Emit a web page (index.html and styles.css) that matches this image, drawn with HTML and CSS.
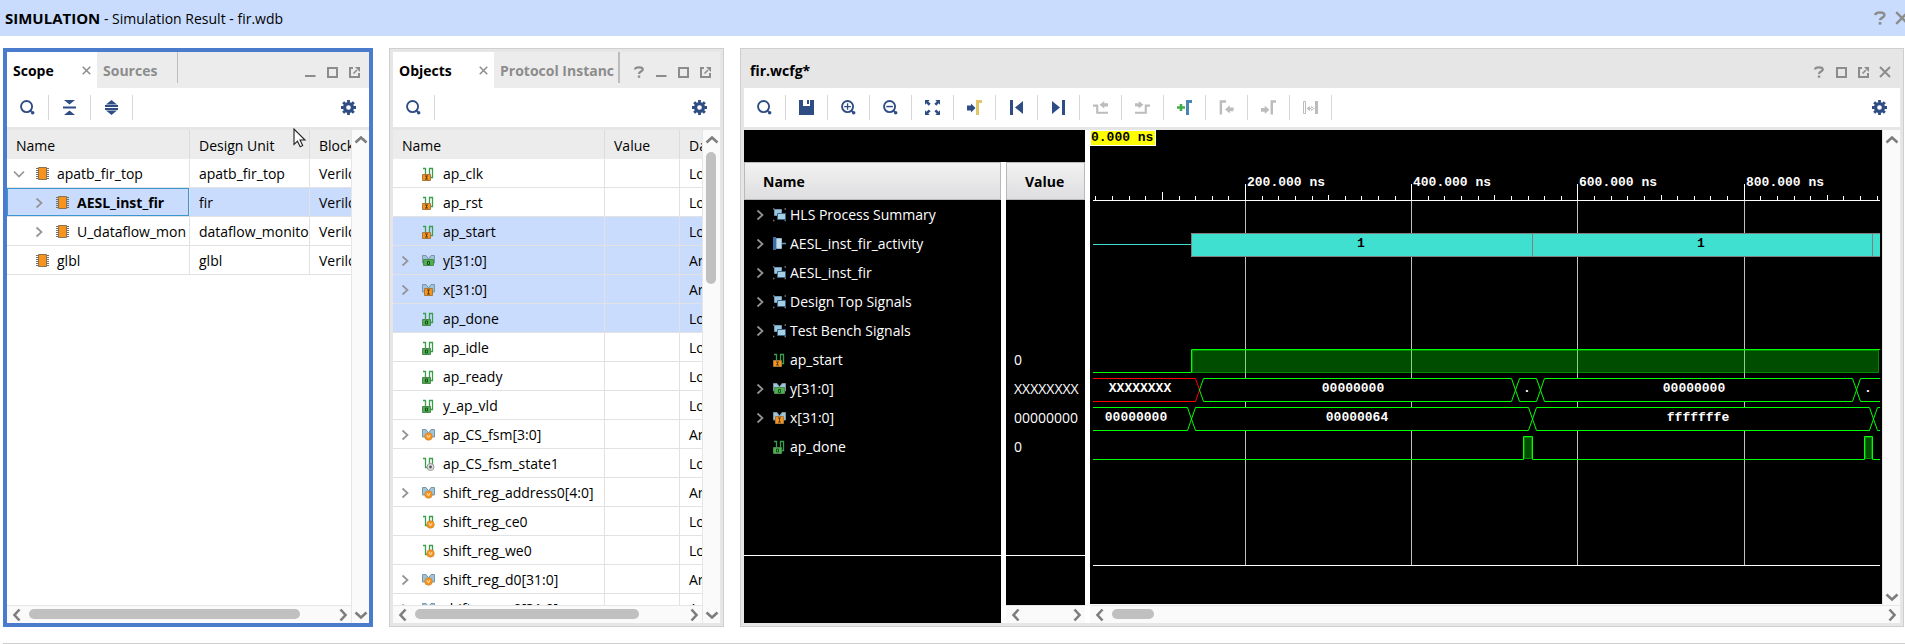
FILE: index.html
```
<!DOCTYPE html>
<html lang="en">
<head>
<meta charset="utf-8">
<title>Simulation Result - fir.wdb</title>
<link rel="stylesheet" href="styles.css">
</head>
<body>
<svg class="defs" aria-hidden="true">
  <symbol id="search" viewBox="0 0 16 16"><circle cx="7" cy="7" r="5.9" fill="none" stroke="currentColor" stroke-width="2"/><path d="M11 11l1.500 1.500" stroke="currentColor" stroke-width="2"/><circle cx="13.500" cy="13.500" r="1.900" fill="currentColor"/></symbol>
  <symbol id="zoomin" viewBox="0 0 16 16"><use href="#search"/><path d="M7 3.500v7M3.500 7h7" stroke="currentColor" stroke-width="1.400"/></symbol>
  <symbol id="zoomout" viewBox="0 0 16 16"><use href="#search"/><path d="M3.500 7h7" stroke="currentColor" stroke-width="1.600"/></symbol>
  <symbol id="collapse" viewBox="0 0 15 15"><path d="M2 0h11L7.500 4.500zM1 6.500h13v2H1zM2 15h11L7.500 10.500z" fill="currentColor"/></symbol>
  <symbol id="expand" viewBox="0 0 15 15"><path d="M2 4.500h11L7.500 0zM1 5h13v2H1zM1 8h13v2H1zM2 10.500h11L7.500 15z" fill="currentColor"/></symbol>
  <symbol id="gear" viewBox="0 0 16 16"><circle cx="8" cy="8" r="4.200" fill="none" stroke="currentColor" stroke-width="3.400"/><path d="M8 0v3M8 13v3M0 8h3M13 8h3M2.300 2.300l2 2M11.700 11.700l2 2M2.300 13.700l2-2M11.700 4.300l2-2" stroke="currentColor" stroke-width="3"/></symbol>
  <symbol id="save" viewBox="0 0 15 15"><path d="M0 0h4v6h7V0h4v15H0zM8 0h2v4H8z" fill="currentColor"/></symbol>
  <symbol id="fit" viewBox="0 0 16 16"><path d="M0 0h5L3.500 1.500 6 4 4 6 1.500 3.500 0 5zM16 0v5l-1.500-1.500L12 6l-2-2 2.500-2.500L11 0zM0 16v-5l1.500 1.500L4 10l2 2-2.500 2.500L5 16zM16 16h-5l1.500-1.500L10 12l2-2 2.500 2.500L16 11z" fill="currentColor"/></symbol>
  <symbol id="gocursor" viewBox="0 0 15 15"><path d="M0 5.500h4V3.500L8.500 8 4 12.500V10.500H0z" fill="currentColor"/><path d="M10.500 15V1.500H15" fill="none" stroke="#e2c566" stroke-width="3"/></symbol>
  <symbol id="first" viewBox="0 0 15 15"><path d="M1 0h3v15H1zM14 1v13L6 7.500z" fill="currentColor"/></symbol>
  <symbol id="last" viewBox="0 0 15 15"><path d="M11 0h3v15h-3zM1 1v13L9 7.500z" fill="currentColor"/></symbol>
  <symbol id="prevedge" viewBox="0 0 16 16"><path d="M0 6h4.500v7.500H16" fill="none" stroke="currentColor" stroke-width="2.200"/><path d="M16 3.500h-4V1L7 5l5 4V7h4z" fill="currentColor"/></symbol>
  <symbol id="nextedge" viewBox="0 0 16 16"><path d="M16 6h-4.500v7.500H0" fill="none" stroke="currentColor" stroke-width="2.200"/><path d="M0 3.500h4V1l5 4-5 4V7H0z" fill="currentColor"/></symbol>
  <symbol id="addmark" viewBox="0 0 15 15"><path d="M4 4v7M0 7.500h8" stroke="#3fae49" stroke-width="2.600"/><path d="M10.500 15V1.500H15" fill="none" stroke="#4a86b4" stroke-width="3"/></symbol>
  <symbol id="prevmark" viewBox="0 0 16 16"><path d="M2 15.500V1.500h5.500" fill="none" stroke="currentColor" stroke-width="2.600"/><path d="M15.500 8h-4V5.500L6.500 10l5 4.500V12h4z" fill="currentColor"/></symbol>
  <symbol id="nextmark" viewBox="0 0 16 16"><path d="M11.500 15.500V1.500H16" fill="none" stroke="currentColor" stroke-width="2.600"/><path d="M0 8.500h4V6l5 4.500-5 4.500v-2.500H0z" fill="currentColor"/></symbol>
  <symbol id="swap" viewBox="0 0 15 15"><path d="M.5 1.500h2v12h-2z" fill="none" stroke="currentColor"/><path d="M12 1h3v13h-3zM7 6v5L3.500 8.500zM8 6v5l3.500-2.500zM6 8h4v1H6z" fill="currentColor"/></symbol>
  <symbol id="min" viewBox="0 0 12 12"><path d="M1 10h10.500" stroke="currentColor" stroke-width="2"/></symbol>
  <symbol id="max" viewBox="0 0 12 12"><path d="M2 2h9v9H2z" fill="none" stroke="currentColor" stroke-width="2"/></symbol>
  <symbol id="float" viewBox="0 0 12 12"><path d="M5 2H2v9h9V7" fill="none" stroke="currentColor" stroke-width="2"/><path d="M5.500 7.500L9 4" stroke="currentColor" stroke-width="1.600"/><path d="M7 1h5v5z" fill="currentColor"/></symbol>
  <symbol id="cross" viewBox="0 0 12 12"><path d="M1 1l10 10M11 1L1 11" stroke="currentColor" stroke-width="2"/></symbol>
  <symbol id="help" viewBox="0 0 12 12"><path d="M2 3.500C2.300.6 9.800.6 9.800 3.600 9.800 5.700 6 5.500 6 8" fill="none" stroke="currentColor" stroke-width="2.200"/><path d="M4.800 9.500h2.400v2.200H4.800z" fill="currentColor"/></symbol>
  <symbol id="right" viewBox="0 0 12 12"><path d="M3.500 1.500L8.500 6l-5 4.500" fill="none" stroke="currentColor" stroke-width="1.700"/></symbol>
  <symbol id="down" viewBox="0 0 12 12"><path d="M1 3.500L6 8.500l5-5" fill="none" stroke="currentColor" stroke-width="1.700"/></symbol>
  <symbol id="sup" viewBox="0 0 14 14"><path d="M1.500 9.500L7 4.500l5.500 5" fill="none" stroke="currentColor" stroke-width="2.600"/></symbol>
  <symbol id="sdown" viewBox="0 0 14 14"><path d="M1.500 4.500L7 9.500l5.500-5" fill="none" stroke="currentColor" stroke-width="2.600"/></symbol>
  <symbol id="sleft" viewBox="0 0 14 14"><path d="M9.500 1.500L4.500 7l5 5.500" fill="none" stroke="currentColor" stroke-width="2.600"/></symbol>
  <symbol id="sright" viewBox="0 0 14 14"><path d="M4.500 1.500L9.500 7l-5 5.500" fill="none" stroke="currentColor" stroke-width="2.600"/></symbol>
  <symbol id="chip" viewBox="0 0 14 14"><path d="M0 1.500h13M0 3.500h13M0 5.500h13M0 7.500h13M0 9.500h13M0 11.500h13" stroke="#6e6e6e"/><path d="M2.500 .5h8v12h-8z" fill="#f7941d" stroke="#8a7350"/></symbol>
  <symbol id="wire" viewBox="0 0 14 14"><path d="M1 1.500H3.500V10.500H7.500V1.500h3V10.500H7.500" fill="none" stroke="#3a9f4b" stroke-width="1.300"/></symbol>
  <symbol id="bus" viewBox="0 0 14 14"><path d="M.5 1.500H4L6.500 5 9 1.500h3.500V9H10L6.500 6 3 9H.5z" fill="#9cc4da" stroke="#7b97a5"/></symbol>
  <symbol id="bin" viewBox="0 0 14 14"><path d="M2.500 7.500h8v6h-8z" fill="#f7941d" stroke="#a8783c"/><path d="M5 9h3M5 12h3M6.500 9v3" stroke="#5a3c14"/></symbol>
  <symbol id="bout" viewBox="0 0 14 14"><path d="M2.500 7.500h8v6h-8z" fill="#4caf50" stroke="#4d8a50"/><path d="M5.500 9h2v3h-2z" fill="none" stroke="#1f4a22"/></symbol>
  <symbol id="bvar" viewBox="0 0 14 14"><circle cx="6.500" cy="9.500" r="3.800" fill="#f7941d" stroke="#c58234" stroke-width=".6"/><path d="M5 8l1.500 3L8 8" fill="none" stroke="#ffe1b8"/></symbol>
  <symbol id="s-in" viewBox="0 0 14 14"><use href="#wire"/><use href="#bin" x="-2"/></symbol>
  <symbol id="s-out" viewBox="0 0 14 14"><use href="#wire"/><use href="#bout" x="-2"/></symbol>
  <symbol id="s-var" viewBox="0 0 14 14"><use href="#wire"/><use href="#bvar" x="2"/></symbol>
  <symbol id="s-reg" viewBox="0 0 14 14"><use href="#wire"/><circle cx="8.500" cy="10" r="3.500" fill="#ddd" stroke="#999"/><circle cx="8.500" cy="10" r="1.400" fill="#555"/></symbol>
  <symbol id="b-in" viewBox="0 0 14 14"><use href="#bus"/><path d="M2.500 5.500h8v7h-8z" fill="#f7941d" stroke="#a8783c"/><path d="M5 7h3M5 11h3M6.500 7v4" stroke="#5a3c14"/></symbol>
  <symbol id="b-out" viewBox="0 0 14 14"><use href="#bus"/><path d="M1.500 5.500h10v6h-10z" fill="#4caf50" stroke="#4d8a50"/><path d="M5.500 7.500h2v3h-2z" fill="none" stroke="#1f4a22"/></symbol>
  <symbol id="b-var" viewBox="0 0 14 14"><use href="#bus"/><use href="#bvar" y="-1"/></symbol>
  <symbol id="group" viewBox="0 0 14 14"><path d="M0 1h1.500M11.500 1H13M0 12.500h1.500M11.500 12.500H13" stroke="#777" stroke-width="1.500"/><path d="M1.500 1.500h7v6h-7z" fill="#9cc4da" stroke="#6b9ab8"/><path d="M4.500 5.500h8v6h-8z" fill="#a5cfe3" stroke="#3c6482"/></symbol>
  <symbol id="activity" viewBox="0 0 14 14"><path d="M0 0h3v13H0z" fill="#3f6da8"/><path d="M3.500 1.500h5v10h-5z" fill="#c5dcec" stroke="#8fb3cc"/><path d="M9 6.500h4" stroke="#5d8fbd" stroke-width="1.600"/></symbol>
</svg>

<header class="titlebar">
  <h1><b>SIMULATION</b> - Simulation Result - fir.wdb</h1>
  <div class="titlebar-tools">
    <button aria-label="Help"><svg><use href="#help"/></svg></button>
    <button aria-label="Close"><svg><use href="#cross"/></svg></button>
  </div>
</header>

<main class="workspace">
  <section class="panel panel-scope" aria-label="Scope">
    <div class="tabs">
      <div class="tab active"><button class="tab-label">Scope</button><button class="tab-close" aria-label="Close Scope"><svg><use href="#cross"/></svg></button></div>
      <div class="tab"><button class="tab-label">Sources</button></div>
      <div class="wintools">
        <button aria-label="Minimize"><svg><use href="#min"/></svg></button>
        <button aria-label="Maximize"><svg><use href="#max"/></svg></button>
        <button aria-label="Float"><svg><use href="#float"/></svg></button>
      </div>
    </div>
    <div class="toolbar">
      <button aria-label="Search"><svg><use href="#search"/></svg></button>
      <button aria-label="Collapse all"><svg><use href="#collapse"/></svg></button>
      <button aria-label="Expand all"><svg><use href="#expand"/></svg></button>
      <button class="settings" aria-label="Settings"><svg><use href="#gear"/></svg></button>
    </div>
    <div class="grid-area">
      <div class="grid-main">
        <div class="grid-view">
          <table>
            <colgroup><col class="scope-name"><col class="scope-unit"><col></colgroup>
            <thead><tr><th>Name</th><th>Design Unit</th><th>Block</th></tr></thead>
            <tbody>
              <tr><td class="tree"><div><i><svg><use href="#down"/></svg></i><svg class="ico"><use href="#chip"/></svg><span>apatb_fir_top</span></div></td><td>apatb_fir_top</td><td>Verilo</td></tr>
              <tr class="selected"><td class="tree nested focused"><div><i><svg><use href="#right"/></svg></i><svg class="ico"><use href="#chip"/></svg><b>AESL_inst_fir</b></div></td><td>fir</td><td>Verilo</td></tr>
              <tr><td class="tree nested"><div><i><svg><use href="#right"/></svg></i><svg class="ico"><use href="#chip"/></svg><span>U_dataflow_mon</span></div></td><td>dataflow_monito</td><td>Verilo</td></tr>
              <tr><td class="tree"><div><i></i><svg class="ico"><use href="#chip"/></svg><span>glbl</span></div></td><td>glbl</td><td>Verilo</td></tr>
            </tbody>
          </table>
        </div>
        <div class="hbar"><button aria-label="Scroll left"><svg><use href="#sleft"/></svg></button><div class="track"><div class="thumb thumb-scope"></div></div><button aria-label="Scroll right"><svg><use href="#sright"/></svg></button></div>
      </div>
      <div class="vbar"><button aria-label="Scroll up"><svg><use href="#sup"/></svg></button><div class="track"></div><button aria-label="Scroll down"><svg><use href="#sdown"/></svg></button></div>
    </div>
    <svg class="pointer" viewBox="0 0 14 20" aria-hidden="true"><path d="M1 1v15.500l3.500-3.300 2.700 5.600 2.500-1.200L7 12h5z" fill="#fff" stroke="#222" stroke-width="1.100"/></svg>
  </section>

  <section class="panel panel-objects" aria-label="Objects">
    <div class="tabs">
      <div class="tab active"><button class="tab-label">Objects</button><button class="tab-close" aria-label="Close Objects"><svg><use href="#cross"/></svg></button></div>
      <div class="tab"><button class="tab-label">Protocol Instanc</button></div>
      <div class="wintools">
        <button aria-label="Help"><svg><use href="#help"/></svg></button>
        <button aria-label="Minimize"><svg><use href="#min"/></svg></button>
        <button aria-label="Maximize"><svg><use href="#max"/></svg></button>
        <button aria-label="Float"><svg><use href="#float"/></svg></button>
      </div>
    </div>
    <div class="toolbar">
      <button aria-label="Search"><svg><use href="#search"/></svg></button>
      <button class="settings" aria-label="Settings"><svg><use href="#gear"/></svg></button>
    </div>
    <div class="grid-area">
      <div class="grid-main">
        <div class="grid-view">
          <table>
            <colgroup><col class="obj-name"><col class="obj-value"><col></colgroup>
            <thead><tr><th>Name</th><th>Value</th><th>Da</th></tr></thead>
            <tbody>
              <tr><td class="tree"><div><i></i><svg class="ico"><use href="#s-in"/></svg><span>ap_clk</span></div></td><td></td><td>Lo</td></tr>
              <tr><td class="tree"><div><i></i><svg class="ico"><use href="#s-in"/></svg><span>ap_rst</span></div></td><td></td><td>Lo</td></tr>
              <tr class="selected"><td class="tree"><div><i></i><svg class="ico"><use href="#s-in"/></svg><span>ap_start</span></div></td><td></td><td>Lo</td></tr>
              <tr class="selected"><td class="tree"><div><i><svg><use href="#right"/></svg></i><svg class="ico"><use href="#b-out"/></svg><span>y[31:0]</span></div></td><td></td><td>Ar</td></tr>
              <tr class="selected"><td class="tree"><div><i><svg><use href="#right"/></svg></i><svg class="ico"><use href="#b-in"/></svg><span>x[31:0]</span></div></td><td></td><td>Ar</td></tr>
              <tr class="selected"><td class="tree"><div><i></i><svg class="ico"><use href="#s-out"/></svg><span>ap_done</span></div></td><td></td><td>Lo</td></tr>
              <tr><td class="tree"><div><i></i><svg class="ico"><use href="#s-out"/></svg><span>ap_idle</span></div></td><td></td><td>Lo</td></tr>
              <tr><td class="tree"><div><i></i><svg class="ico"><use href="#s-out"/></svg><span>ap_ready</span></div></td><td></td><td>Lo</td></tr>
              <tr><td class="tree"><div><i></i><svg class="ico"><use href="#s-out"/></svg><span>y_ap_vld</span></div></td><td></td><td>Lo</td></tr>
              <tr><td class="tree"><div><i><svg><use href="#right"/></svg></i><svg class="ico"><use href="#b-var"/></svg><span>ap_CS_fsm[3:0]</span></div></td><td></td><td>Ar</td></tr>
              <tr><td class="tree"><div><i></i><svg class="ico"><use href="#s-reg"/></svg><span>ap_CS_fsm_state1</span></div></td><td></td><td>Lo</td></tr>
              <tr><td class="tree"><div><i><svg><use href="#right"/></svg></i><svg class="ico"><use href="#b-var"/></svg><span>shift_reg_address0[4:0]</span></div></td><td></td><td>Ar</td></tr>
              <tr><td class="tree"><div><i></i><svg class="ico"><use href="#s-var"/></svg><span>shift_reg_ce0</span></div></td><td></td><td>Lo</td></tr>
              <tr><td class="tree"><div><i></i><svg class="ico"><use href="#s-var"/></svg><span>shift_reg_we0</span></div></td><td></td><td>Lo</td></tr>
              <tr><td class="tree"><div><i><svg><use href="#right"/></svg></i><svg class="ico"><use href="#b-var"/></svg><span>shift_reg_d0[31:0]</span></div></td><td></td><td>Ar</td></tr>
              <tr><td class="tree"><div><i><svg><use href="#right"/></svg></i><svg class="ico"><use href="#b-var"/></svg><span>shift_reg_q0[31:0]</span></div></td><td></td><td>Ar</td></tr>
            </tbody>
          </table>
        </div>
        <div class="hbar"><button aria-label="Scroll left"><svg><use href="#sleft"/></svg></button><div class="track"><div class="thumb thumb-objects"></div></div><button aria-label="Scroll right"><svg><use href="#sright"/></svg></button></div>
      </div>
      <div class="vbar"><button aria-label="Scroll up"><svg><use href="#sup"/></svg></button><div class="track"><div class="thumb thumb-rows"></div></div><button aria-label="Scroll down"><svg><use href="#sdown"/></svg></button></div>
    </div>
  </section>

  <section class="panel panel-wave" aria-label="Waveform">
    <div class="tabs">
      <h2>fir.wcfg*</h2>
      <div class="wintools">
        <button aria-label="Help"><svg><use href="#help"/></svg></button>
        <button aria-label="Maximize"><svg><use href="#max"/></svg></button>
        <button aria-label="Float"><svg><use href="#float"/></svg></button>
        <button aria-label="Close"><svg><use href="#cross"/></svg></button>
      </div>
    </div>
    <div class="toolbar">
      <button aria-label="Search"><svg><use href="#search"/></svg></button>
      <button aria-label="Save"><svg><use href="#save"/></svg></button>
      <button aria-label="Zoom in"><svg><use href="#zoomin"/></svg></button>
      <button aria-label="Zoom out"><svg><use href="#zoomout"/></svg></button>
      <button aria-label="Zoom fit"><svg><use href="#fit"/></svg></button>
      <button aria-label="Go to cursor"><svg><use href="#gocursor"/></svg></button>
      <button aria-label="Go to time 0"><svg><use href="#first"/></svg></button>
      <button aria-label="Go to last time"><svg><use href="#last"/></svg></button>
      <button disabled aria-label="Previous transition"><svg><use href="#prevedge"/></svg></button>
      <button disabled aria-label="Next transition"><svg><use href="#nextedge"/></svg></button>
      <button aria-label="Add marker"><svg><use href="#addmark"/></svg></button>
      <button disabled aria-label="Previous marker"><svg><use href="#prevmark"/></svg></button>
      <button disabled aria-label="Next marker"><svg><use href="#nextmark"/></svg></button>
      <button disabled aria-label="Swap cursors"><svg><use href="#swap"/></svg></button>
      <button class="settings" aria-label="Settings"><svg><use href="#gear"/></svg></button>
    </div>
    <div class="wave-area">
      <div class="signals">
        <div class="signals-top"></div>
        <div class="signals-cols">
          <div class="sigcol sigcol-name">
            <h3>Name</h3>
            <ul>
              <li><i><svg><use href="#right"/></svg></i><svg class="ico"><use href="#group"/></svg><span>HLS Process Summary</span></li>
              <li><i><svg><use href="#right"/></svg></i><svg class="ico"><use href="#activity"/></svg><span>AESL_inst_fir_activity</span></li>
              <li><i><svg><use href="#right"/></svg></i><svg class="ico"><use href="#group"/></svg><span>AESL_inst_fir</span></li>
              <li><i><svg><use href="#right"/></svg></i><svg class="ico"><use href="#group"/></svg><span>Design Top Signals</span></li>
              <li><i><svg><use href="#right"/></svg></i><svg class="ico"><use href="#group"/></svg><span>Test Bench Signals</span></li>
              <li><i></i><svg class="ico"><use href="#s-in"/></svg><span>ap_start</span></li>
              <li><i><svg><use href="#right"/></svg></i><svg class="ico"><use href="#b-out"/></svg><span>y[31:0]</span></li>
              <li><i><svg><use href="#right"/></svg></i><svg class="ico"><use href="#b-in"/></svg><span>x[31:0]</span></li>
              <li><i></i><svg class="ico"><use href="#s-out"/></svg><span>ap_done</span></li>
            </ul>
            <div class="sig-foot"></div>
          </div>
          <div class="sigcol sigcol-value">
            <h3>Value</h3>
            <ul>
              <li></li><li></li><li></li><li></li><li></li>
              <li>0</li><li>XXXXXXXX</li><li>00000000</li><li>0</li>
            </ul>
            <div class="sig-foot"></div>
            <div class="hbar"><button aria-label="Scroll left"><svg><use href="#sleft"/></svg></button><div class="track"></div><button aria-label="Scroll right"><svg><use href="#sright"/></svg></button></div>
          </div>
        </div>
      </div>
      <div class="plot">
        <div class="plot-row">
          <div class="canvas">
            <svg class="waves" role="img" aria-label="Signal waveforms">
              <!-- grid lines -->
              <path class="gridline" d="M155.500 71V435M321.500 71V435M487.500 71V435M654.500 71V435"/>
              <!-- time ruler -->
              <path class="ruler" d="M3 70.500H790M3 435.500H790M155.500 54V70M321.500 54V70M487.500 54V70M654.500 54V70M72.500 62v8M238.500 65v5M404.500 65v5M571.500 65v5M737.500 65v5M5.500 66v4M22.500 66v4M39.500 66v4M55.500 66v4M89.500 66v4M105.500 66v4M122.500 66v4M138.500 66v4M172.500 66v4M188.500 66v4M205.500 66v4M222.500 66v4M255.500 66v4M271.500 66v4M288.500 66v4M305.500 66v4M338.500 66v4M354.500 66v4M371.500 66v4M388.500 66v4M421.500 66v4M438.500 66v4M454.500 66v4M471.500 66v4M504.500 66v4M521.500 66v4M537.500 66v4M554.500 66v4M587.500 66v4M604.500 66v4M620.500 66v4M637.500 66v4M670.500 66v4M687.500 66v4M704.500 66v4M720.500 66v4M753.500 66v4M770.500 66v4M787.500 66v4"/>
              <g class="time">
                <text x="157" y="56">200.000 ns</text><text x="323" y="56">400.000 ns</text><text x="489" y="56">600.000 ns</text><text x="656" y="56">800.000 ns</text>
              </g>
              <!-- activity -->
              <path d="M3 114.500H101" stroke="#40e0d0"/>
              <path d="M101 103H790V127H101z" fill="#40e0d0"/>
              <path d="M790 103.500H101.500V126.500H790M442.500 103V127M782.500 103V127" fill="none" stroke="#808080"/>
              <text class="dark" x="271" y="117">1</text><text class="dark" x="611" y="117">1</text>
              <!-- ap_start -->
              <path class="fill" d="M102 220H789V243H102z"/>
              <path class="rim" d="M102.500 220.500H788.500V242.500H102.500z"/>
              <path class="line" d="M3 242.500H101.500V219.500H790"/>
              <!-- y[31:0] -->
              <path d="M3 248H790V272H3zM3 277H790V301H3z" fill="#000"/>
              <path class="line unknown" d="M3 248.500H105.500L109.500 260M3 271.500H105.500L109.500 260"/>
              <path class="line" d="M109.500 260L113.500 248.500H421.500L429.500 271.500H446.500L454.500 248.500H762.500L770.500 271.500H790M109.500 260L113.500 271.500H421.500L429.500 248.500H446.500L454.500 271.500H762.500L770.500 248.500H790"/>
              <text x="50" y="262">XXXXXXXX</text><text x="263" y="262">00000000</text><text x="437" y="262">.</text><text x="604" y="262">00000000</text><text x="778" y="262">.</text>
              <!-- x[31:0] -->
              <path class="line" d="M3 277.500H97.500L105.500 300.500H438.500L446.500 277.500H779.500L787.500 300.500H790M3 300.500H97.500L105.500 277.500H438.500L446.500 300.500H779.500L787.500 277.500H790"/>
              <text x="46" y="291">00000000</text><text x="267" y="291">00000064</text><text x="608" y="291">fffffffe</text>
              <!-- ap_done -->
              <path class="fill" d="M434 307h8v22h-8zM775 307h7v22h-7z"/>
              <path class="rim" d="M434.500 307.500h7v21h-7zM775.500 307.500h6v21h-6z"/>
              <path class="line" d="M3 329.500H433.500V306.500H442.500V329.500H774.500V306.500H782.500V329.500H790"/>
            </svg>
            <div class="cursor-time">0.000 ns</div>
          </div>
          <div class="vbar"><button aria-label="Scroll up"><svg><use href="#sup"/></svg></button><div class="track"></div><button aria-label="Scroll down"><svg><use href="#sdown"/></svg></button></div>
        </div>
        <div class="hbar"><button aria-label="Scroll left"><svg><use href="#sleft"/></svg></button><div class="track"><div class="thumb thumb-time"></div></div><button aria-label="Scroll right"><svg><use href="#sright"/></svg></button></div>
      </div>
    </div>
  </section>
</main>
<footer class="statusline"></footer>
</body>
</html>
```

FILE: styles.css
```
* { box-sizing: border-box; }

body {
  margin: 0;
  height: 100vh;
  min-height: 400px;
  display: flex;
  flex-direction: column;
  overflow: hidden;
  background: #fff;
  color: #000;
  font: 14px/20px "Open Sans", "Noto Sans", sans-serif;
}

h1, h2, h3, ul { margin: 0; padding: 0; font-size: inherit; list-style: none; }
h1 { font-weight: 400; }
svg { display: block; flex: none; }
button {
  display: flex;
  align-items: center;
  justify-content: center;
  padding: 0;
  border: 0;
  background: none;
  color: inherit;
  font: inherit;
}
.defs { position: absolute; width: 0; height: 0; }

/* title bar */
.titlebar {
  flex: none;
  display: flex;
  align-items: center;
  justify-content: space-between;
  height: 36px;
  padding-left: 5px;
  background: #cadcfe;
  overflow: hidden;
}
.titlebar h1 { font-size: 14px; }
.titlebar b { font-size: 15px; }
.titlebar-tools { display: flex; margin-right: -4px; gap: 8px; color: #8c8c8c; }
.titlebar-tools svg { width: 14px; height: 14px; }

/* panels */
.workspace {
  flex: 1;
  min-height: 0;
  display: flex;
  gap: 16px;
  padding: 12px 1px 16px 3px;
}
.panel {
  position: relative;
  display: flex;
  flex-direction: column;
  min-width: 0;
  border: 1px solid #cfcfcf;
  padding: 3px;
  background: #e6e6e6;
}
.panel-scope { flex: 0 1 370px; padding: 0; border: 4px solid #4a7bcd; }
.panel-objects { flex: 0 1 335px; }
.panel-wave { flex: 1; }

.tabs { flex: none; display: flex; height: 36px; background: #ececec; overflow: hidden; }
.panel-wave .tabs { background: #e6e6e6; }
.tabs h2 { padding-left: 6px; line-height: 37px; }
.tab {
  display: flex;
  align-items: center;
  height: 31px;
  min-width: 0;
  padding: 6px 20px 0 6px;
  border-right: 1px solid #bdbdbd;
  color: #8c8c8c;
  overflow: hidden;
}
.tab.active { height: 36px; flex: none; padding: 1px 6px 0; border: 0; background: #fff; color: #000; justify-content: space-between; }
.panel-scope .tab.active { width: 90px; }
.panel-objects .tab.active { width: 101px; }
.panel-objects .tab:not(.active) { padding-right: 0; border-right-width: 2px; width: 126px; justify-content: flex-start; }
.tab-label { font-weight: 700; white-space: nowrap; }
.tab-close { width: 10px; color: #8c8c8c; }
.tab-close svg { width: 9px; height: 9px; }
.wintools { flex: none; display: flex; align-items: center; margin-left: auto; padding: 4px 4px 0 0; color: #8c8c8c; }
.wintools button { width: 22px; }
.wintools svg { width: 12px; height: 12px; }

.toolbar {
  flex: none;
  display: flex;
  align-items: center;
  height: 42px;
  border-bottom: 3px solid #e6e6e6;
  background: #fff;
  color: #2f4d85;
}
.toolbar button { width: 42px; height: 25px; border-right: 1px solid #d6d6d6; }
.toolbar button:disabled { color: #bcbcbc; }
.toolbar .settings { width: 41px; margin-left: auto; border: 0; }
.toolbar svg { width: 15px; height: 15px; }

/* tables */
.grid-area { flex: 1; min-height: 0; display: flex; background: #fff; }
.grid-main { flex: 1; min-width: 0; display: flex; flex-direction: column; }
.grid-view { flex: 1; min-height: 0; overflow: hidden; }
table { width: 100%; table-layout: fixed; border-collapse: separate; border-spacing: 0; }
.scope-name { width: 183px; }
.scope-unit { width: 120px; }
.obj-name { width: 212px; }
.obj-value { width: 75px; }
th, td {
  height: 29px;
  padding: 2px 0 0 9px;
  border-right: 1px solid #e2e2e2;
  border-bottom: 1px solid #e2e2e2;
  text-align: left;
  font-weight: 400;
  white-space: nowrap;
  overflow: hidden;
}
th { padding-top: 3px; background: #ececec; border-bottom-color: #ececec; border-right-color: #dcdcdc; }
th:last-child, td:last-child { border-right: 0; }
td.tree { padding-left: 0; }
.tree div { display: flex; align-items: center; }
.tree.nested div { padding-left: 20px; }
.tree i { width: 24px; margin-right: 5px; display: flex; justify-content: center; flex: none; color: #949494; }
i svg { width: 12px; height: 12px; }
.ico { width: 14px; height: 14px; margin-right: 7px; }
.selected td { background: #cadcfe; }
td.focused { box-shadow: inset 0 0 0 1px #3b97d3; }

/* scroll bars */
.vbar, .hbar { flex: none; display: flex; background: #fafafa; color: #7d7d7d; }
.vbar { width: 18px; flex-direction: column; border-left: 1px solid #e6e6e6; }
.hbar { height: 18px; border-top: 1px solid #e6e6e6; }
.vbar svg, .hbar svg { width: 14px; height: 14px; }
.vbar button { height: 20px; }
.vbar button:last-child { height: 17px; }
.hbar button { width: 20px; }
.hbar button:last-child { width: 16px; }
.track { flex: 1; min-width: 0; min-height: 0; }
.thumb { border-radius: 5px; background: #c0c0c0; }
.hbar .thumb { height: 10px; margin: 3px 2px; }
.vbar .thumb { width: 10px; margin: 2px 3px; }
.thumb-scope { width: 88%; }
.thumb-objects { width: 82%; }
.thumb-rows { height: 29%; }
.thumb-time { width: 42px; }

.pointer { position: absolute; left: 286px; top: 76px; width: 14px; height: 20px; }

/* waveform */
.wave-area { flex: 1; min-height: 0; display: flex; gap: 5px; background: #fff; }
.signals { flex: none; width: 341px; display: flex; flex-direction: column; }
.signals-top { flex: none; height: 32px; background: #000; }
.signals-cols { flex: 1; min-height: 0; display: flex; gap: 5px; }
.sigcol { display: flex; flex-direction: column; min-width: 0; overflow: hidden; background: #000; color: #fff; }
.sigcol-name { width: 257px; }
.sigcol-value { flex: 1; }
.sigcol h3 {
  flex: none;
  height: 38px;
  padding-left: 18px;
  border: 1px solid #b9b9b9;
  background: linear-gradient(#f2f2f2, #dedee0);
  color: #000;
  line-height: 37px;
}
.sigcol ul { flex: 1; min-height: 0; overflow: hidden; }
.sigcol li { display: flex; align-items: center; height: 29px; padding-left: 4px; white-space: nowrap; }
.sigcol-value li { padding-left: 8px; }
.sigcol i { width: 24px; display: flex; justify-content: center; flex: none; color: #949494; }
.sigcol .ico { margin-left: 1px; margin-right: 3px; }
.sig-foot { flex: none; height: 50px; border-top: 1px solid #fff; }
.sigcol-name .sig-foot { height: 68px; }

.plot { flex: 1; min-width: 0; display: flex; flex-direction: column; }
.plot-row { flex: 1; min-height: 0; display: flex; }
.canvas { position: relative; flex: 1; min-width: 0; overflow: hidden; background: #000; border-bottom: 1px solid #fff; }
.waves { width: 100%; height: 100%; fill: none; stroke-width: 1; }
.waves text { fill: #fff; font: 700 13px "Liberation Mono", monospace; text-anchor: middle; }
.waves .time text { text-anchor: start; }
.waves text.dark { fill: #000; }
.gridline { stroke: #c0c0c0; }
.ruler { stroke: #fff; }
.fill { fill: rgba(0, 255, 0, .3); }
.rim { stroke: rgba(0, 255, 0, .35); }
.line { stroke: #0f0; }
.line.unknown { stroke: #f00; }
.cursor-time {
  position: absolute;
  left: 0;
  top: 0;
  height: 16px;
  padding-right: 2px;
  border: 1px solid #fff;
  background: #ff0;
  color: #000;
  font: 700 13px/14px "Liberation Mono", monospace;
}

.statusline { flex: none; margin-left: 3px; height: 1px; background: #cfcfcf; }
```
